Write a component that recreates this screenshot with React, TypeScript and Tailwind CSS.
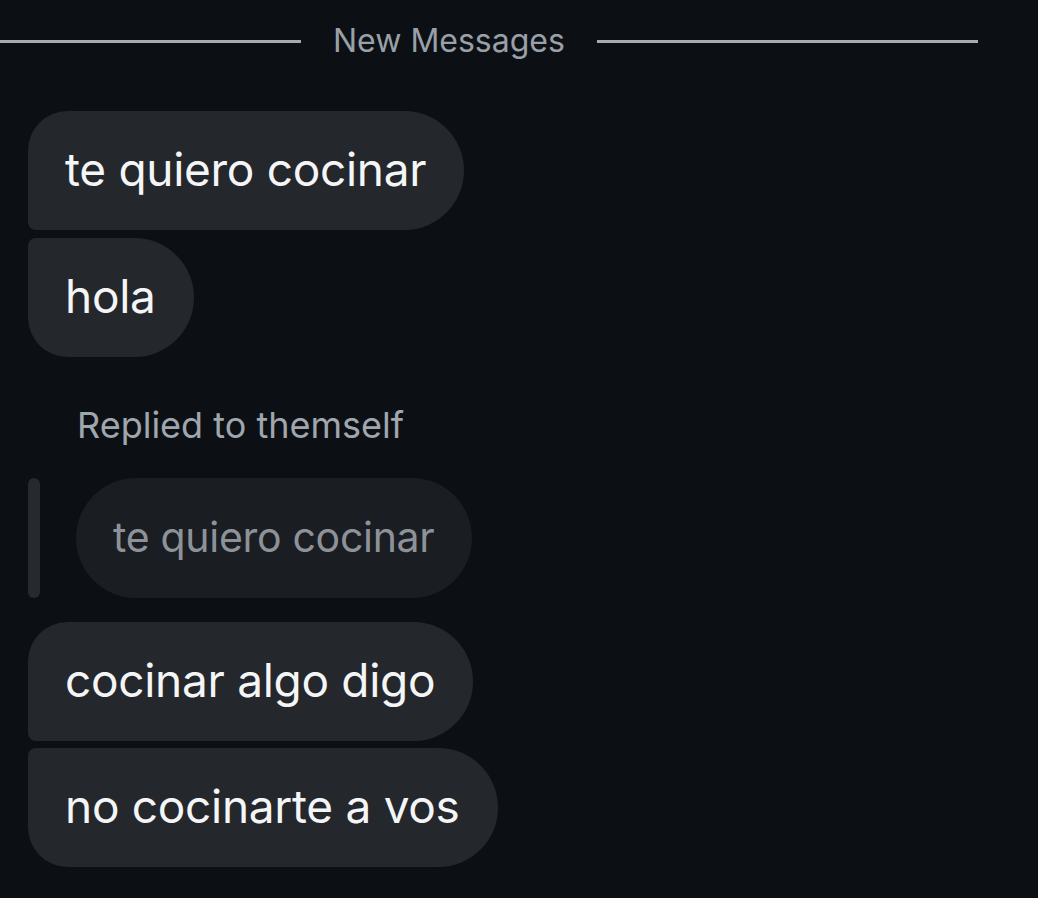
const font = { fontFamily: 'Inter, "Noto Sans", sans-serif' };

function Bubble({ text, shape }: { text: string; shape: string }) {
  return (
    <div
      className={`flex h-[119px] w-fit items-center bg-[#24272c] pb-[3px] pl-[37px] pr-[38px] text-[46px] leading-none tracking-[-0.3px] text-[#f4f5f6] ${shape}`}
    >
      {text}
    </div>
  );
}

export default function App() {
  return (
    <div className="h-[898px] w-[1038px] overflow-hidden bg-[#0c1014]" style={font}>
      {/* divider */}
      <div className="flex h-[82px] items-center pr-[60px]">
        <div className="h-[3px] w-[301px] bg-[#a7acb3]" />
        <div className="px-[32px] text-[32px] leading-none text-[#9aa0a8]">New Messages</div>
        <div className="h-[3px] flex-1 bg-[#a7acb3]" />
      </div>

      <div className="flex flex-col pl-[28px]">
        <div className="mt-[29px]">
          <Bubble text="te quiero cocinar" shape="rounded-tl-[40px] rounded-bl-[8px] rounded-r-[60px]" />
        </div>
        <div className="mt-[8px]">
          <Bubble text="hola" shape="rounded-tl-[8px] rounded-bl-[40px] rounded-r-[60px]" />
        </div>

        <div className="mt-[50px] pl-[49px] text-[36px] leading-none text-[#a0a6ad]">Replied to themself</div>

        {/* quoted reply */}
        <div className="mt-[35px] flex gap-[36px]">
          <div className="w-[12px] rounded-full bg-[#26292e]" />
          <div className="flex h-[120px] items-center rounded-[60px] bg-[#1a1d21] pb-[2px] pl-[37px] pr-[38px] text-[41px] leading-none tracking-[-0.3px] text-[#8d9299]">
            te quiero cocinar
          </div>
        </div>

        <div className="mt-[24px]">
          <Bubble text="cocinar algo digo" shape="rounded-tl-[40px] rounded-bl-[8px] rounded-r-[60px]" />
        </div>
        <div className="mt-[7px]">
          <Bubble text="no cocinarte a vos" shape="rounded-tl-[8px] rounded-bl-[40px] rounded-r-[60px]" />
        </div>
      </div>
    </div>
  );
}
